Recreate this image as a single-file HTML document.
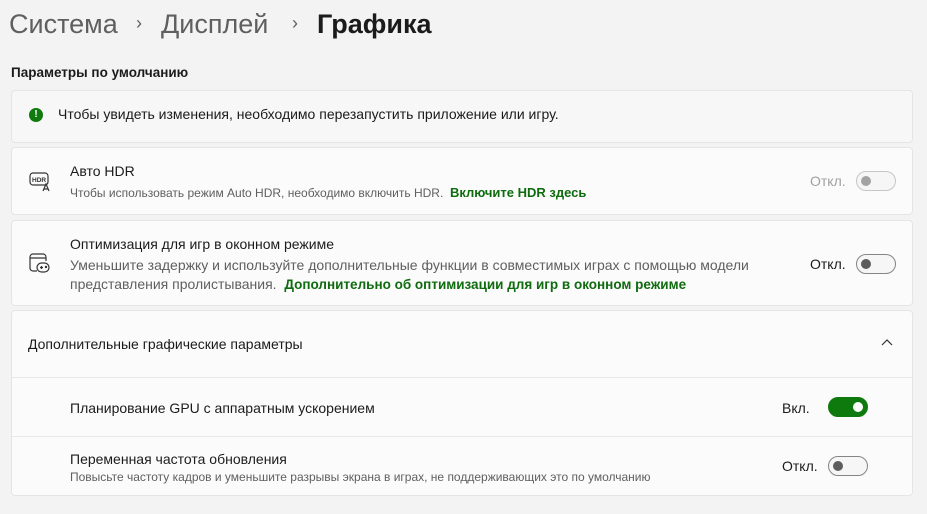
<!DOCTYPE html>
<html><head><meta charset="utf-8"><style>
body{margin:0;width:927px;height:514px;background:#f3f3f3;font-family:"Segoe UI","Liberation Sans",sans-serif;color:#1b1b1b;position:relative;overflow:hidden}
.a{position:absolute;white-space:nowrap}
.card{position:absolute;left:11px;width:900px;background:#fbfbfb;border:1px solid #e5e5e5;border-radius:4px}
.t{font-size:14px}
.s{font-size:12px;color:#5f5f5f}
.tg{position:absolute;width:38px;height:18px;border:1px solid #858585;border-radius:10px;background:#f6f6f6}
.tg::after{content:"";position:absolute;left:4px;top:4px;width:10px;height:10px;border-radius:50%;background:#5d5d5d}
.on{background:#0e7a0d;border-color:#0e7a0d}
.on::after{left:24px;background:#fff}
.dis{border-color:#c6c6c6}.dis::after{background:#a3a3a3}
.g{color:#0e6b0e;font-weight:bold}
.line{position:absolute;left:12px;width:900px;height:1px;background:#e8e8e8}
</style></head><body>
<div class="a" style="left:9px;top:9px;font-size:27px;color:#5f5f5f">Система</div>
<div class="a" style="left:136px;top:13px;font-size:18px;color:#5f5f5f">›</div>
<div class="a" style="left:161px;top:9px;font-size:27px;color:#5f5f5f">Дисплей</div>
<div class="a" style="left:292px;top:13px;font-size:18px;color:#5f5f5f">›</div>
<div class="a" style="left:317px;top:9px;font-size:27px;font-weight:600">Графика</div>
<div class="a" style="left:11px;top:65px;font-size:13.5px;font-weight:600">Параметры по умолчанию</div>
<div class="card" style="top:90px;height:51px;background:#f7f7f7"></div>
<div class="a" style="left:29px;top:108px;width:14px;height:14px;border-radius:50%;background:#0f7b0f;color:#fff;font-size:10px;text-align:center;line-height:14px;font-weight:bold">!</div>
<div class="a t" style="left:58px;top:106px">Чтобы увидеть изменения, необходимо перезапустить приложение или игру.</div>

<div class="card" style="top:147px;height:66px"></div>
<svg class="a" style="left:29px;top:171px" width="22" height="22" viewBox="0 0 22 22" fill="none" stroke="#333" stroke-width="1.2"><rect x="1" y="2" width="18" height="12" rx="3"/><text x="3" y="11" font-size="6.5" font-family="Liberation Sans" fill="#333" stroke="none" font-weight="bold">HDR</text><path d="M14 20l3-7 3 7M15 18h4"/></svg>
<div class="a t" style="left:70px;top:163px">Авто HDR</div>
<div class="a s" style="left:70px;top:185px">Чтобы использовать режим Auto HDR, необходимо включить HDR. &nbsp;<span class="g" style="font-size:13px">Включите HDR здесь</span></div>
<div class="a t" style="left:810px;top:173px;color:#a0a0a0">Откл.</div>
<div class="tg dis" style="left:856px;top:171px"></div>

<div class="card" style="top:220px;height:84px"></div>
<svg class="a" style="left:28px;top:252px" width="22" height="22" viewBox="0 0 22 22" fill="none" stroke="#333" stroke-width="1.2"><path d="M9 19H5a3 3 0 0 1-3-3V5a3 3 0 0 1 3-3h10a3 3 0 0 1 3 3v4M2 6h16"/><rect x="9" y="11" width="12" height="9" rx="4.5"/><path d="M12 15.5h3M13.5 14v3"/><circle cx="18" cy="15" r=".6" fill="#333"/></svg>
<div class="a t" style="left:70px;top:236px">Оптимизация для игр в оконном режиме</div>
<div class="a" style="left:70px;top:256px;font-size:14px;color:#5f5f5f;line-height:19px">Уменьшите задержку и используйте дополнительные функции в совместимых играх с помощью модели<br>представления пролистывания. &nbsp;<span class="g" style="font-size:13.5px">Дополнительно об оптимизации для игр в оконном режиме</span></div>
<div class="a t" style="left:810px;top:256px">Откл.</div>
<div class="tg" style="left:856px;top:254px"></div>

<div class="card" style="top:310px;height:184px"></div>
<div class="a t" style="left:28px;top:336px">Дополнительные графические параметры</div>
<svg class="a" style="left:880px;top:337px" width="14" height="10"><path d="M2 8l5-5 5 5" stroke="#333" stroke-width="1.2" fill="none"/></svg>
<div class="line" style="top:377px"></div>
<div class="a t" style="left:70px;top:400px">Планирование GPU с аппаратным ускорением</div>
<div class="a t" style="left:782px;top:400px">Вкл.</div>
<div class="tg on" style="left:828px;top:397px"></div>
<div class="line" style="top:436px"></div>
<div class="a t" style="left:70px;top:451px">Переменная частота обновления</div>
<div class="a" style="left:70px;top:470px;font-size:12px;color:#5f5f5f">Повысьте частоту кадров и уменьшите разрывы экрана в играх, не поддерживающих это по умолчанию</div>
<div class="a t" style="left:782px;top:458px">Откл.</div>
<div class="tg" style="left:828px;top:456px"></div>
</body></html>
